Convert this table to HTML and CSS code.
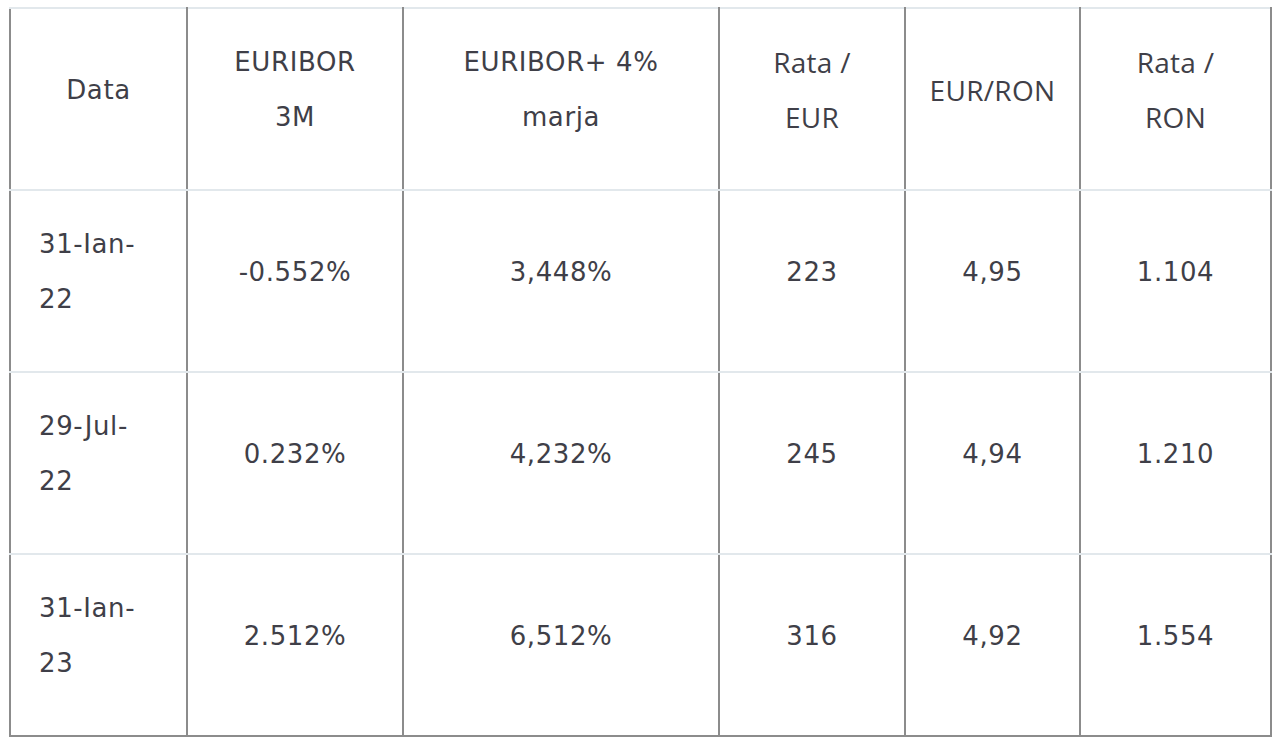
FILE: index.html
```html
<!DOCTYPE html>
<html lang="ro">
<head>
<meta charset="utf-8">
<title>EURIBOR</title>
<link rel="stylesheet" href="styles.css">
</head>
<body>
<table class="rates">
  <colgroup>
    <col class="c1"><col class="c2"><col class="c3"><col class="c4"><col class="c5"><col class="c6">
  </colgroup>
  <thead>
    <tr>
      <th>Data</th>
      <th>EURIBOR<br>3M</th>
      <th>EURIBOR+ 4%<br>marja</th>
      <th class="alt">Rata /<br>EUR</th>
      <th class="alt">EUR/RON</th>
      <th class="alt">Rata /<br>RON</th>
    </tr>
  </thead>
  <tbody>
    <tr>
      <td class="date">31-Ian-<br>22</td>
      <td>-0.552%</td>
      <td>3,448%</td>
      <td>223</td>
      <td>4,95</td>
      <td>1.104</td>
    </tr>
    <tr>
      <td class="date">29-Jul-<br>22</td>
      <td>0.232%</td>
      <td>4,232%</td>
      <td>245</td>
      <td>4,94</td>
      <td>1.210</td>
    </tr>
    <tr>
      <td class="date">31-Ian-<br>23</td>
      <td>2.512%</td>
      <td>6,512%</td>
      <td>316</td>
      <td>4,92</td>
      <td>1.554</td>
    </tr>
  </tbody>
</table>
</body>
</html>
```
FILE: styles.css
```css
html, body {
  margin: 0;
  padding: 0;
  background: #ffffff;
}

.rates {
  margin: 7px 0 0 9px;
  width: 1261px;
  table-layout: fixed;
  border-collapse: collapse;
  font-family: Verdana, "DejaVu Sans", sans-serif;
  font-size: 26px;
  line-height: 55px;
  letter-spacing: 0.6px;
  color: #3f3f48;
}

.c1 { width: 177px; }
.c2 { width: 216px; }
.c3 { width: 316px; }
.c4 { width: 186px; }
.c5 { width: 175px; }
.c6 { width: 191px; }

.rates th,
.rates td {
  border-top: 2px solid #e2e8ec;
  border-bottom: 2px solid #e2e8ec;
  border-left: 2px solid #8c8c8c;
  border-right: 2px solid #8c8c8c;
  padding: 26px 10px 44px;
  text-align: center;
  vertical-align: middle;
  font-weight: normal;
  white-space: nowrap;
}

.rates tbody tr:last-child td {
  border-bottom-color: #8c8c8c;
}

.rates th.alt {
  font-family: "Open Sans", sans-serif;
  font-size: 28px;
  letter-spacing: 0.3px;
}

.rates td.date {
  text-align: left;
  padding-left: 28px;
}
```
